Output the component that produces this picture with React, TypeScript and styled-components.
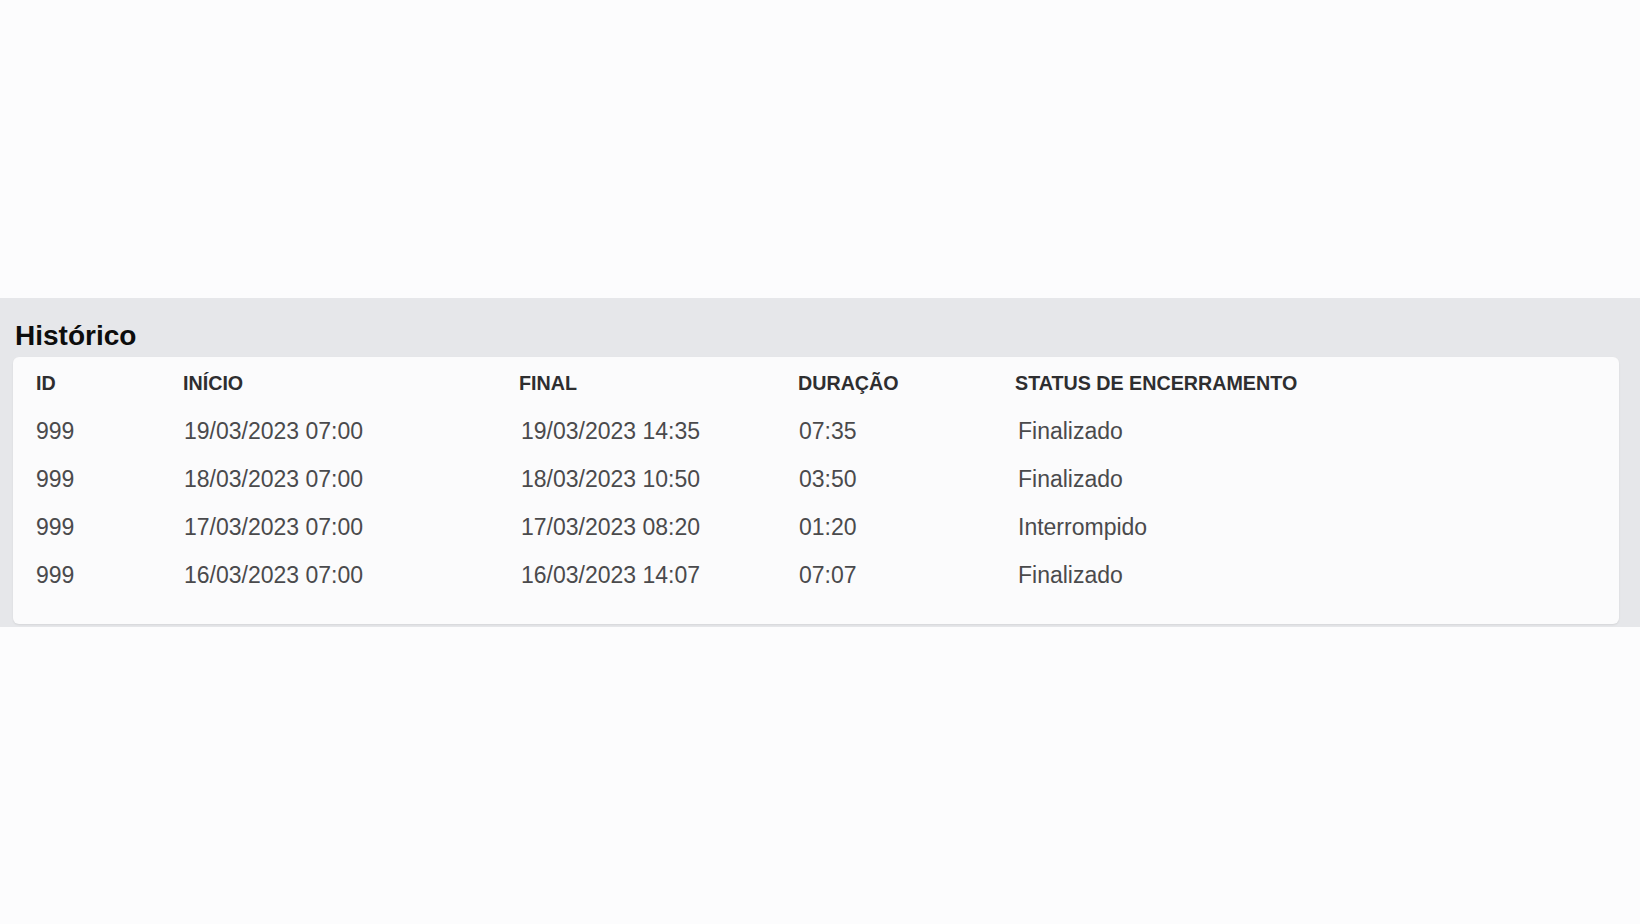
import styled, { createGlobalStyle } from "styled-components";

interface Sessao {
  id: string;
  inicio: string;
  final: string;
  duracao: string;
  status: string;
}

const historico: Sessao[] = [
  { id: "999", inicio: "19/03/2023 07:00", final: "19/03/2023 14:35", duracao: "07:35", status: "Finalizado" },
  { id: "999", inicio: "18/03/2023 07:00", final: "18/03/2023 10:50", duracao: "03:50", status: "Finalizado" },
  { id: "999", inicio: "17/03/2023 07:00", final: "17/03/2023 08:20", duracao: "01:20", status: "Interrompido" },
  { id: "999", inicio: "16/03/2023 07:00", final: "16/03/2023 14:07", duracao: "07:07", status: "Finalizado" },
];

const GlobalStyle = createGlobalStyle`
  html, body {
    margin: 0;
    padding: 0;
    background: #fcfcfd;
    font-family: "Liberation Sans", Arial, Helvetica, sans-serif;
  }
`;

const Page = styled.main`
  min-height: 924px;
  padding-top: 298px;
  box-sizing: border-box;
`;

const HistorySection = styled.section`
  background: #e6e7ea;
  padding: 23px 21px 3px 13px;
`;

const Title = styled.h2`
  margin: 0 0 6px 2px;
  font-size: 28px;
  line-height: 30px;
  font-weight: 700;
  color: #0d0d0d;
`;

const Card = styled.div`
  background: #fbfbfc;
  border-radius: 6px;
  box-shadow: 0 1px 2px rgba(0, 0, 0, 0.08);
  padding: 2px 0 25px 23px;
`;

const Row = styled.div`
  display: grid;
  grid-template-columns: 147px 336px 279px 217px 1fr;
  height: 48px;
  align-items: center;
`;

const HeadCell = styled.div`
  font-size: 19.7px;
  font-weight: 700;
  color: #2e2e30;
  white-space: nowrap;
`;

const Cell = styled.div<{ $shift?: number }>`
  font-size: 23px;
  color: #4a4a4c;
  white-space: nowrap;
  padding-left: ${(p) => p.$shift ?? 0}px;
`;

export default function App() {
  return (
    <>
      <GlobalStyle />
      <Page>
        <HistorySection>
          <Title>Histórico</Title>
          <Card>
            <Row>
              <HeadCell>ID</HeadCell>
              <HeadCell>INÍCIO</HeadCell>
              <HeadCell>FINAL</HeadCell>
              <HeadCell>DURAÇÃO</HeadCell>
              <HeadCell>STATUS DE ENCERRAMENTO</HeadCell>
            </Row>
            {historico.map((s, i) => (
              <Row key={i}>
                <Cell>{s.id}</Cell>
                <Cell $shift={1}>{s.inicio}</Cell>
                <Cell $shift={2}>{s.final}</Cell>
                <Cell $shift={1}>{s.duracao}</Cell>
                <Cell $shift={3}>{s.status}</Cell>
              </Row>
            ))}
          </Card>
        </HistorySection>
      </Page>
    </>
  );
}
